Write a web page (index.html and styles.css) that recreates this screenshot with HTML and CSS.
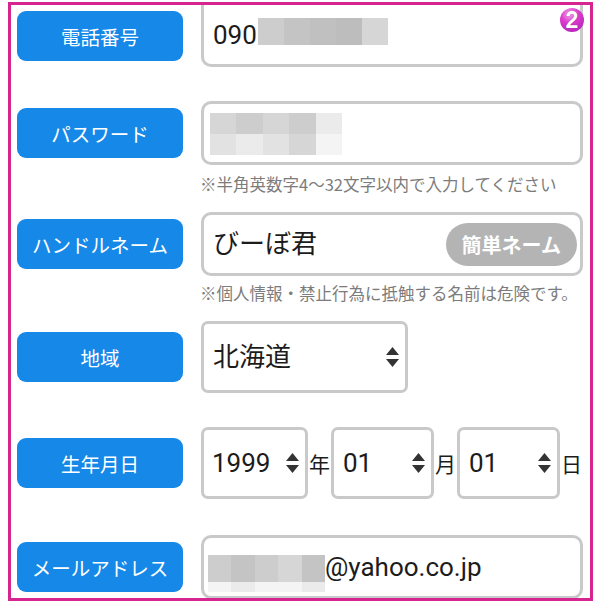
FILE: index.html
```html
<!DOCTYPE html>
<html lang="ja">
<head>
<meta charset="utf-8">
<title>登録フォーム</title>
<link rel="stylesheet" href="styles.css">
</head>
<body>
<div class="frame">
  <div class="badge">2</div>

  <div class="row first">
    <div class="label">電話番号</div>
    <div class="field cut">
      <span class="value">090</span>
      <span class="mosaic m1">
        <i class="g3"></i><i class="g2"></i><i class="g2b"></i><i class="g1"></i><i class="g4"></i>
      </span>
    </div>
  </div>

  <div class="row gap-l">
    <div class="label">パスワード</div>
    <div class="field pad-s">
      <span class="mosaic m2">
        <i class="g4"></i><i class="g3"></i><i class="g4"></i><i class="g3"></i><i class="g6"></i>
        <i class="g5"></i><i class="g6"></i><i class="g5"></i><i class="g4"></i><i class="g7"></i>
      </span>
    </div>
  </div>
  <p class="hint h1">※半角英数字4〜32文字以内で入力してください</p>

  <div class="row gap-s">
    <div class="label">ハンドルネーム</div>
    <div class="field between">
      <span class="value">びーぼ君</span>
      <span class="pill">簡単ネーム</span>
    </div>
  </div>
  <p class="hint h2">※個人情報・禁止行為に抵触する名前は危険です。</p>

  <div class="row gap-s">
    <div class="label">地域</div>
    <div class="select region">
      <span class="value">北海道</span>
      <svg class="arrows" viewBox="0 0 13 20" width="13" height="20"><polygon points="0,8 6.5,0 13,8"/><polygon points="0,12 13,12 6.5,20"/></svg>
    </div>
  </div>

  <div class="row gap-l">
    <div class="label">生年月日</div>
    <div class="date">
      <div class="select year">
        <span class="value">1999</span>
        <svg class="arrows" viewBox="0 0 13 20" width="13" height="20"><polygon points="0,8 6.5,0 13,8"/><polygon points="0,12 13,12 6.5,20"/></svg>
      </div>
      <span class="unit">年</span>
      <div class="select day">
        <span class="value">01</span>
        <svg class="arrows" viewBox="0 0 13 20" width="13" height="20"><polygon points="0,8 6.5,0 13,8"/><polygon points="0,12 13,12 6.5,20"/></svg>
      </div>
      <span class="unit">月</span>
      <div class="select day">
        <span class="value">01</span>
        <svg class="arrows" viewBox="0 0 13 20" width="13" height="20"><polygon points="0,8 6.5,0 13,8"/><polygon points="0,12 13,12 6.5,20"/></svg>
      </div>
      <span class="unit">日</span>
    </div>
  </div>

  <div class="row gap-xl">
    <div class="label">メールアドレス</div>
    <div class="field pad-xs">
      <span class="mosaic m3">
        <i class="g3"></i><i class="g2"></i><i class="g3"></i><i class="g4"></i><i class="g2"></i>
        <i class="g7"></i><i class="g6"></i><i class="g7"></i><i class="g7"></i><i class="g6"></i>
      </span>
      <span class="value">@yahoo.co.jp</span>
    </div>
  </div>
</div>
</body>
</html>
```

FILE: styles.css
```css
* { box-sizing: border-box; }

html, body {
  margin: 0;
  padding: 0;
  background: #ffffff;
}

body {
  font-family: Roboto, "Noto Sans CJK JP", sans-serif;
  color: #1c1c1c;
}

.frame {
  position: relative;
  margin: 2px 0 0 8px;
  width: 585px;
  height: 599px;
  border: 3px solid #d6258f;
  overflow: hidden;
  padding: 0 7px 0 6px;
  background: #ffffff;
}

.badge {
  position: absolute;
  left: 549px;
  top: 3px;
  width: 24px;
  height: 24px;
  border-radius: 50%;
  background: radial-gradient(circle at 40% 25%, #f8a6e6 0%, #dc3ccd 38%, #a81cb4 100%);
  color: #ffffff;
  font-family: "Liberation Sans", Arial, sans-serif;
  font-weight: 700;
  font-size: 23px;
  line-height: 24px;
  text-align: center;
  text-shadow: 0 0 1px #8a1896;
  z-index: 2;
}

.row {
  display: flex;
  align-items: center;
  gap: 18px;
}

.row.gap-l { margin-top: 34px; }
.row.gap-s { margin-top: 18px; }
.row.gap-xl { margin-top: 36px; }

.label {
  flex: 0 0 166px;
  height: 50px;
  border-radius: 9px;
  background: #1688e7;
  color: #ffffff;
  font-family: "Noto Sans CJK JP", sans-serif;
  font-weight: 400;
  font-size: 19.5px;
  display: flex;
  align-items: center;
  justify-content: center;
}

.field {
  flex: 0 0 382px;
  height: 64px;
  border: 3px solid #c9c9c9;
  border-radius: 10px;
  display: flex;
  align-items: center;
  padding: 0 3px 0 9px;
  font-size: 26px;
}

.field.cut {
  height: 62px;
  border-top: none;
  border-radius: 0 0 10px 10px;
}

.field.pad-s { padding-left: 6px; }
.field.pad-xs { padding-left: 4px; }
.field.between { justify-content: space-between; }

.value {
  font-size: 26px;
  line-height: 1;
  color: #1c1c1c;
}

.mosaic {
  display: grid;
  grid-template-columns: repeat(5, 1fr);
}

.mosaic i { display: block; }

.m1 {
  width: 130px;
  height: 27px;
  margin-left: 1px;
  margin-top: -7px;
}

.m2 {
  width: 132px;
  height: 42px;
  grid-template-rows: 21px 21px;
  margin-top: 2px;
}

.m3 {
  width: 117px;
  height: 37px;
  grid-template-rows: 27px 10px;
  margin-top: 12px;
}

.g1 { background: #bdbdbd; }
.g2 { background: #c4c4c4; }
.g2b { background: #c0c0c0; }
.g3 { background: #cdcdcd; }
.g4 { background: #d6d6d6; }
.g5 { background: #e2e2e2; }
.g6 { background: #ebebeb; }
.g7 { background: #f4f4f4; }

.pill {
  height: 43px;
  padding: 0 16px;
  border-radius: 22px;
  background: #b4b4b4;
  color: #ffffff;
  font-family: "Noto Sans CJK JP", sans-serif;
  font-weight: 700;
  font-size: 20px;
  display: flex;
  align-items: center;
}

.hint {
  margin: 0 0 0 183px;
  font-family: "Noto Sans CJK JP", sans-serif;
  font-size: 16.5px;
  line-height: 20px;
  color: #7c7c7c;
  white-space: nowrap;
}

.hint.h1 { margin-top: 9px; }
.hint.h2 { margin-top: 7px; }

.select {
  height: 72px;
  border: 3px solid #c9c9c9;
  border-radius: 7px;
  display: flex;
  align-items: center;
  justify-content: space-between;
  padding: 0 6px 0 9px;
}

.select.region { flex: 0 0 207px; }
.select.year { width: 107px; padding-left: 8px; }
.select.day { width: 103px; }

.arrows { fill: #333333; display: block; }

.date {
  display: flex;
  align-items: center;
}

.unit {
  width: 23px;
  text-align: center;
  font-family: "Noto Sans CJK JP", sans-serif;
  font-size: 21px;
  color: #1c1c1c;
}
```
